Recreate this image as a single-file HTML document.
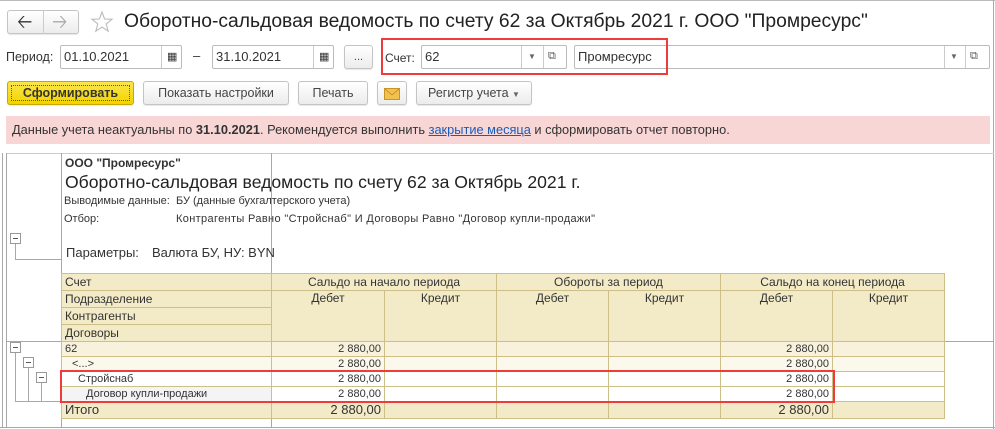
<!DOCTYPE html>
<html><head><meta charset="utf-8"><style>
*{margin:0;padding:0;box-sizing:border-box}
body{width:995px;height:429px;overflow:hidden;background:#fff;font-family:"Liberation Sans",Arial,sans-serif;color:#333;position:relative}
.a{position:absolute;white-space:nowrap}
.btn{position:absolute;border:1px solid #c4c4c4;border-radius:3px;background:linear-gradient(#fff,#ececec);font-size:12.5px;color:#444;text-align:center;line-height:22px;height:24px;box-shadow:0 1px 1px rgba(0,0,0,.1)}
.inp{position:absolute;border:1px solid #bbb;border-radius:2px;background:#fff;height:24px;font-size:13px;line-height:22px;padding-left:3px;color:#333}
.sep{position:absolute;top:0;bottom:0;border-left:1px solid #ccc}
.red{position:absolute;border:2px solid #ee3b3b}
.g{position:absolute;background:#a8a8a8}
.box{position:absolute;width:11px;height:11px;border:1px solid #999;background:#fff}
.box:after{content:"";position:absolute;left:2px;top:4px;width:5px;height:1px;background:#555}
table{position:absolute;left:61px;top:273px;border-collapse:collapse;font-size:11px;color:#333}
td{border:1px solid #cdbf86;padding:0 3px;height:15px;line-height:14px;overflow:hidden;white-space:nowrap}
.h td{background:#f3ebc8;font-size:12px}
.c{text-align:center}.r{text-align:right}
</style></head><body>
<div class="g" style="left:0;top:0;width:995px;height:1px;background:#bbb"></div>
<div class="g" style="left:993px;top:0;width:1px;height:429px;background:#aaa"></div>
<div class="g" style="left:0;top:427px;width:995px;height:1px"></div>

<div class="btn" style="left:7px;top:10px;width:72px;height:24px"></div>
<div class="a" style="left:43px;top:10px;width:1px;height:24px;background:#ccc"></div>
<div class="a" style="left:17px;top:8px;font-size:19px;color:#333">&#129120;</div>
<div class="a" style="left:52px;top:8px;font-size:19px;color:#aaa">&#129122;</div>
<svg class="a" style="left:90px;top:10px" width="24" height="24" viewBox="0 0 24 24"><path d="M12 2 L14.6 9 L22 9.3 L16.2 13.9 L18.2 21.2 L12 17 L5.8 21.2 L7.8 13.9 L2 9.3 L9.4 9Z" fill="none" stroke="#bbb" stroke-width="1.1"/></svg>
<div class="a" style="left:124px;top:11px;font-size:19.3px;color:#222">Оборотно-сальдовая ведомость по счету 62 за Октябрь 2021 г. ООО "Промресурс"</div>

<div class="a" style="left:6px;top:50px;font-size:12.5px">Период:</div>
<div class="inp" style="left:60px;top:45px;width:122px">01.10.2021<div class="sep" style="left:100px"></div><div class="a" style="left:106px;top:0;font-size:11px">▦</div></div>
<div class="a" style="left:193px;top:48px;font-size:13px">–</div>
<div class="inp" style="left:212px;top:45px;width:122px">31.10.2021<div class="sep" style="left:100px"></div><div class="a" style="left:106px;top:0;font-size:11px">▦</div></div>
<div class="btn" style="left:344px;top:45px;width:29px;font-size:11px">...</div>
<div class="a" style="left:385px;top:51px;font-size:12px">Счет:</div>
<div class="inp" style="left:421px;top:45px;width:146px">62<div class="sep" style="left:99px"></div><div class="sep" style="left:121px"></div><div class="a" style="left:106px;top:0;font-size:8px;color:#666">▼</div><div class="a" style="left:126px;top:-1px;font-size:11px;color:#555">⧉</div></div>
<div class="inp" style="left:574px;top:45px;width:416px">Промресурс<div class="sep" style="left:369px"></div><div class="sep" style="left:390px"></div><div class="a" style="left:375px;top:0;font-size:8px;color:#666">▼</div><div class="a" style="left:395px;top:-1px;font-size:11px;color:#555">⧉</div></div>
<div class="red" style="left:381px;top:38px;width:287px;height:37px"></div>

<div class="btn" style="left:7px;top:81px;width:127px;background:linear-gradient(#fbe64a,#f2d300);border-color:#c9a800;font-weight:bold;font-size:12.5px;color:#333"><div style="position:absolute;left:3px;top:3px;right:3px;bottom:3px;border:1px dotted #555"></div>Сформировать</div>
<div class="btn" style="left:143px;top:81px;width:146px">Показать настройки</div>
<div class="btn" style="left:298px;top:81px;width:70px">Печать</div>
<div class="btn" style="left:377px;top:81px;width:30px"><svg width="16" height="12" viewBox="0 0 16 12" style="margin-top:6px"><rect x=".5" y=".5" width="15" height="11" fill="#f2c24e" stroke="#c9932a"/><path d="M.5 .5 L8 7 L15.5 .5" fill="none" stroke="#c9932a"/></svg></div>
<div class="btn" style="left:416px;top:81px;width:116px">Регистр учета <span style="font-size:8px;color:#666">▼</span></div>

<div class="a" style="left:6px;top:116px;width:984px;height:28px;background:#f9d6d6;font-size:12.8px;line-height:28px;padding-left:6px;color:#333">Данные учета неактуальны по <b>31.10.2021</b>. Рекомендуется выполнить <span style="color:#1a5bb8;text-decoration:underline">закрытие месяца</span> и сформировать отчет повторно.</div>

<div class="g" style="left:6px;top:153px;width:988px;height:1px;background:#ccc"></div>
<div class="g" style="left:2px;top:153px;width:1px;height:275px"></div>
<div class="g" style="left:6px;top:153px;width:1px;height:275px"></div>
<div class="g" style="left:61px;top:153px;width:1px;height:275px"></div>
<div class="g" style="left:271px;top:153px;width:1px;height:275px"></div>
<div class="g" style="left:6px;top:341px;width:988px;height:1px"></div>
<div class="g" style="left:15px;top:243px;width:1px;height:17px"></div>
<div class="g" style="left:15px;top:259px;width:46px;height:1px"></div>
<div class="box" style="left:10px;top:233px"></div>

<div class="a" style="left:65px;top:156px;font-size:12px;font-weight:bold;color:#333">ООО "Промресурс"</div>
<div class="a" style="left:65px;top:172px;font-size:17.6px;color:#222">Оборотно-сальдовая ведомость по счету 62 за Октябрь 2021 г.</div>
<div class="a" style="left:64px;top:195px;font-size:11px">Выводимые данные:</div>
<div class="a" style="left:176px;top:195px;font-size:11px">БУ (данные бухгалтерского учета)</div>
<div class="a" style="left:64px;top:213px;font-size:11px">Отбор:</div>
<div class="a" style="left:176px;top:213px;font-size:11px;letter-spacing:0.35px">Контрагенты Равно "Стройснаб" И Договоры Равно "Договор купли-продажи"</div>
<div class="a" style="left:66px;top:245px;font-size:13px">Параметры:</div>
<div class="a" style="left:152px;top:245px;font-size:13px">Валюта БУ, НУ: BYN</div>

<table>
<colgroup><col style="width:210px"><col style="width:113px"><col style="width:112px"><col style="width:112px"><col style="width:112px"><col style="width:112px"><col style="width:112px"></colgroup>
<tr class="h"><td style="height:17px">Счет</td><td colspan="2" class="c">Сальдо на начало периода</td><td colspan="2" class="c">Обороты за период</td><td colspan="2" class="c">Сальдо на конец периода</td></tr>
<tr class="h"><td style="height:17px">Подразделение</td><td class="c" rowspan="3" style="vertical-align:top">Дебет</td><td class="c" rowspan="3" style="vertical-align:top">Кредит</td><td class="c" rowspan="3" style="vertical-align:top">Дебет</td><td class="c" rowspan="3" style="vertical-align:top">Кредит</td><td class="c" rowspan="3" style="vertical-align:top">Дебет</td><td class="c" rowspan="3" style="vertical-align:top">Кредит</td></tr>
<tr class="h"><td style="height:17px">Контрагенты</td></tr>
<tr class="h"><td style="height:17px">Договоры</td></tr>
<tr style="background:#f8f2dd"><td>62</td><td class="r">2 880,00</td><td></td><td></td><td></td><td class="r">2 880,00</td><td></td></tr>
<tr style="background:#fbf8ec"><td style="padding-left:10px">&lt;...&gt;</td><td class="r">2 880,00</td><td></td><td></td><td></td><td class="r">2 880,00</td><td></td></tr>
<tr><td style="padding-left:16px">Стройснаб</td><td class="r">2 880,00</td><td></td><td></td><td></td><td class="r">2 880,00</td><td></td></tr>
<tr><td style="padding-left:24px;background:#f4f4f4">Договор купли-продажи</td><td class="r">2 880,00</td><td></td><td></td><td></td><td class="r">2 880,00</td><td></td></tr>
<tr style="background:#f3ebc8;font-size:13px"><td style="height:17px">Итого</td><td class="r">2 880,00</td><td></td><td></td><td></td><td class="r">2 880,00</td><td></td></tr>
</table>

<div class="g" style="left:15px;top:352px;width:1px;height:50px"></div>
<div class="g" style="left:28px;top:367px;width:1px;height:35px"></div>
<div class="g" style="left:41px;top:382px;width:1px;height:20px"></div>
<div class="g" style="left:15px;top:401px;width:46px;height:1px"></div>
<div class="box" style="left:10px;top:342px"></div>
<div class="box" style="left:23px;top:357px"></div>
<div class="box" style="left:36px;top:372px"></div>

<div class="red" style="left:60px;top:370px;width:775px;height:33px"></div>
</body></html>
